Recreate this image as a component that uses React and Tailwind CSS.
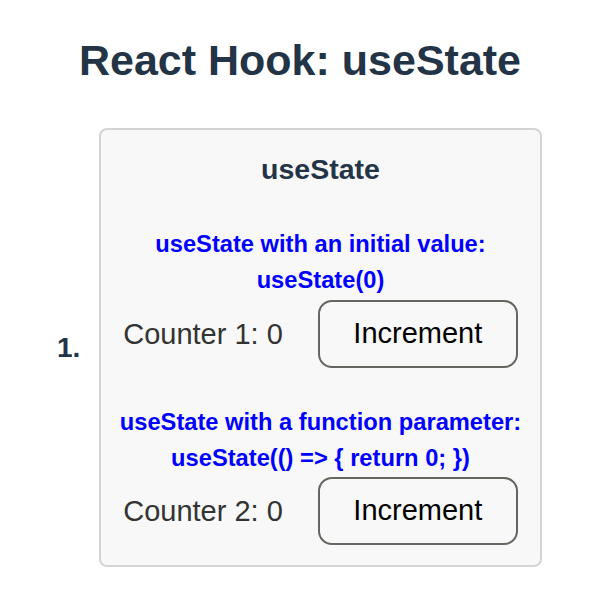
import React, { useState } from "react";

const CounterRow = ({ label, value, onIncrement }) => (
  <div className="flex items-center justify-center gap-[35px]">
    <span className="text-[29px] text-[#333333] leading-[34px]">
      {label}: {value}
    </span>
    <button
      onClick={onIncrement}
      className="w-[200px] h-[68px] border-2 border-[#666660] rounded-[14px] text-[29px] text-black bg-transparent"
    >
      Increment
    </button>
  </div>
);

const App = () => {
  const [count1, setCount1] = useState(0);
  const [count2, setCount2] = useState(() => {
    return 0;
  });

  return (
    <div className="w-[600px] h-[600px] bg-white font-['Liberation_Sans',Arial,sans-serif]">
      {/* Page title */}
      <h1 className="pt-[35px] text-center text-[43px] leading-[50px] font-bold text-[#233446]">
        React Hook: useState
      </h1>

      <div className="flex items-center mt-[43px] pl-[57px]">
        <span className="w-[42px] text-[28px] font-bold text-[#233446]">1.</span>

        {/* Card */}
        <div className="w-[443px] bg-[#f8f8f8] border-2 border-[#d4d4d4] rounded-[8px] pt-[23px] pb-[20px]">
          <h2 className="text-center text-[28.5px] leading-[32px] font-bold text-[#233446]">
            useState
          </h2>

          <p className="mt-[41px] text-center text-[23.7px] leading-[36px] font-bold text-[#0000ff]">
            useState with an initial value:
            <br />
            useState(0)
          </p>
          <div className="mt-[2px]">
            <CounterRow label="Counter 1" value={count1} onIncrement={() => setCount1(count1 + 1)} />
          </div>

          <p className="mt-[36px] text-center text-[23.7px] leading-[36px] font-bold text-[#0000ff]">
            useState with a function parameter:
            <br />
            {"useState(() => { return 0; })"}
          </p>
          <div className="mt-[1px]">
            <CounterRow label="Counter 2" value={count2} onIncrement={() => setCount2((c) => c + 1)} />
          </div>
        </div>
      </div>
    </div>
  );
};

export default App;
